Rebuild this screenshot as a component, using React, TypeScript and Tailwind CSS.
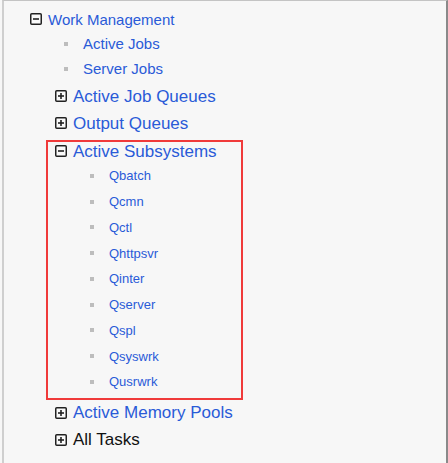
import React from "react";

const BLUE = "text-[#2a5bd7]";

function Toggle({ open }: { open: boolean }) {
  return (
    <svg width="12" height="12" viewBox="0 0 12 12" className="shrink-0">
      <rect x="0.75" y="0.75" width="10.5" height="10.5" rx="1" fill="#fafafa" stroke="#222" strokeWidth="1.5" />
      <line x1="3" y1="6" x2="9" y2="6" stroke="#222" strokeWidth="1.6" />
      {!open && <line x1="6" y1="3" x2="6" y2="9" stroke="#222" strokeWidth="1.6" />}
    </svg>
  );
}

function Bullet() {
  return <span className="block w-[4px] h-[4px] bg-[#bdbdbd] shrink-0" />;
}

const subsystems = ["Qbatch", "Qcmn", "Qctl", "Qhttpsvr", "Qinter", "Qserver", "Qspl", "Qsyswrk", "Qusrwrk"];

export default function App() {
  return (
    <div className="w-[448px] h-[463px] bg-[#f7f7f7] overflow-hidden" style={{ fontFamily: '"Liberation Sans", Arial, sans-serif' }}>
      <div className="ml-[2px] h-full border-l-2 border-l-[#cfcfcf] border-t border-t-[#c4c4c4] border-r-2 border-r-[#8a8a8a] pt-[5px]">
        <div className="h-[26px] flex items-center pl-[26px]">
          <Toggle open />
          <span className={`ml-[6px] text-[15px] leading-none ${BLUE}`}>Work Management</span>
        </div>
        <div className="h-[23px] flex items-center pl-[60px]">
          <Bullet />
          <span className={`ml-[15px] text-[15px] leading-none ${BLUE}`}>Active Jobs</span>
        </div>
        <div className="h-[27px] flex items-center pl-[60px]">
          <Bullet />
          <span className={`ml-[15px] text-[15px] leading-none ${BLUE}`}>Server Jobs</span>
        </div>
        <div className="h-[28px] flex items-center pl-[51px]">
          <Toggle open={false} />
          <span className={`ml-[6px] text-[17px] leading-none ${BLUE}`}>Active Job Queues</span>
        </div>
        <div className="h-[26px] flex items-center pl-[51px]">
          <Toggle open={false} />
          <span className={`ml-[6px] text-[17px] leading-none ${BLUE}`}>Output Queues</span>
        </div>
        <div className="mt-[4px] ml-[42px] w-[197px] h-[260px] border-2 border-[#f03a3a]">
          <div className="h-[18px] flex items-center pl-[7px]">
            <Toggle open />
            <span className={`ml-[6px] text-[17px] leading-none ${BLUE}`}>Active Subsystems</span>
          </div>
          <div className="pt-[3px]">
            {subsystems.map((s) => (
              <div key={s} className="h-[25.75px] flex items-center pl-[42px]">
                <Bullet />
                <span className={`ml-[15px] text-[13px] leading-none ${BLUE}`}>{s}</span>
              </div>
            ))}
          </div>
        </div>
        <div className="h-[25px] flex items-center pl-[51px]">
          <Toggle open={false} />
          <span className={`ml-[6px] text-[17px] leading-none ${BLUE}`}>Active Memory Pools</span>
        </div>
        <div className="h-[29px] flex items-center pl-[51px]">
          <Toggle open={false} />
          <span className="ml-[6px] text-[17px] leading-none text-[#111]">All Tasks</span>
        </div>
      </div>
    </div>
  );
}
